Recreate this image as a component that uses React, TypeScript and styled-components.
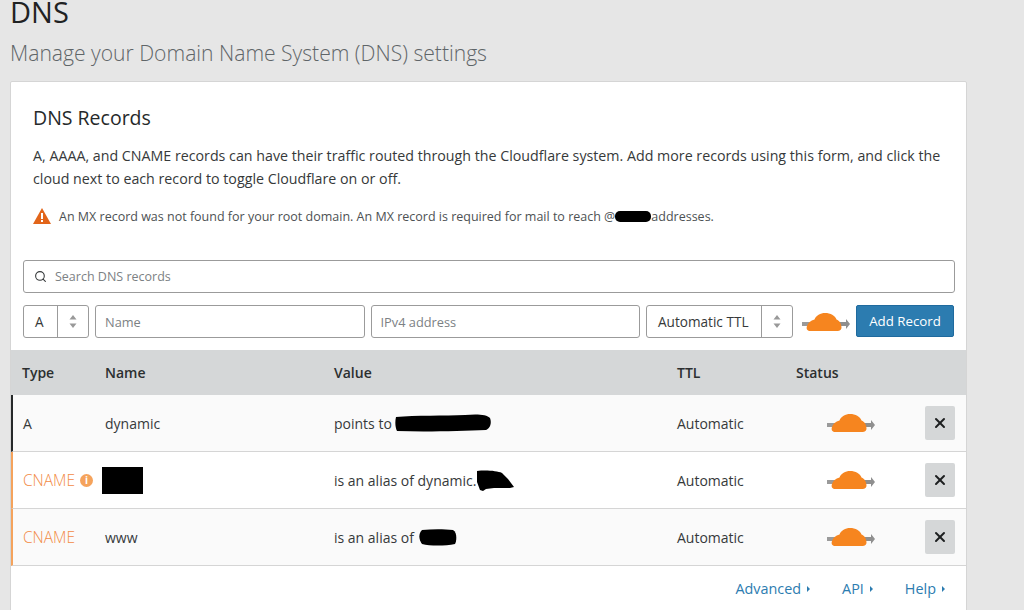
import styled, { createGlobalStyle } from "styled-components";
import { Search, X } from "lucide-react";

const GlobalStyle = createGlobalStyle`
  html, body {
    margin: 0;
    height: 100%;
    overflow: hidden;
    background: #e6e6e6;
    font-family: "Open Sans", "Liberation Sans", sans-serif;
    color: #36393a;
  }
`;

const Cloud = () => (
  <CloudSvg viewBox="0 0 48 18" width="48" height="18">
    <path d="M0 9h40v4H0z" fill="#9a9a9a" />
    <path d="M38 9h6V6l4 5-4 5v-3h-6z" fill="#8f8f8f" />
    <path
      d="M8 18C5 18 4 15.500 5 13 6 10 8.500 7.500 12.500 6.500 14 2.500 18.500 0 23 0 28.500 0 33 2.500 34.500 6.500 37.500 7.500 39.500 11 39.500 14.500 39.500 16.500 38 18 35.500 18z"
      fill="#f6851f"
    />
  </CloudSvg>
);

const Stepper = () => (
  <svg width="8" height="13" viewBox="0 0 8 13">
    <path d="M4 0l3.500 4.500h-7z M4 13L.5 8.500h7z" fill="#999" />
  </svg>
);

const Blob = ({ w, h, d }: { w: number; h: number; d: string }) => (
  <BlobSvg width={w} height={h} viewBox={`0 0 ${w} ${h}`}>
    <path d={d} fill="#000" />
  </BlobSvg>
);

const records = [
  {
    type: "A",
    proxied: false,
    name: "dynamic",
    value: "points to",
    gap: 3,
    blob: { w: 96, h: 18, d: "M1 3C20 1 50 2 70 1c10-1 22-1 25 3 2 5 0 11-4 12-25 1-60 2-89 1C0 13 0 7 1 3z" },
  },
  {
    type: "CNAME",
    proxied: true,
    info: true,
    name: "",
    value: "is an alias of dynamic.",
    gap: -2,
    blob: { w: 38, h: 21, d: "M1 1c10-1 20 0 25 2l6 6 6 8-4 1-16 0-8 1-3 2-3-1-3-8z" },
  },
  {
    type: "CNAME",
    proxied: true,
    name: "www",
    value: "is an alias of",
    gap: 5,
    blob: { w: 38, h: 17, d: "M3 1c10-1 22-1 31 0 4 2 4 10 2 14-10 2-25 2-33 0-3-4-4-10 0-14z" },
  },
];

export default function App() {
  return (
    <Page>
      <GlobalStyle />
      <PageTitle>DNS</PageTitle>
      <PageSubtitle>Manage your Domain Name System (DNS) settings</PageSubtitle>
      <Card>
        <Intro>
          <CardTitle>DNS Records</CardTitle>
          <Lead>
            A, AAAA, and CNAME records can have their traffic routed through the Cloudflare system. Add more
            records using this form, and click the cloud next to each record to toggle Cloudflare on or off.
          </Lead>
          <Warning>
            <svg width="18" height="16" viewBox="0 0 18 16">
              <path d="M9 0l9 16H0z" fill="#e2651a" />
              <path d="M8 5h2v6H8zM8 12h2v2H8z" fill="#fff" />
            </svg>
            <WarningText>
              An MX record was not found for your root domain. An MX record is required for mail to reach @
              <MailBlob />
              addresses.
            </WarningText>
          </Warning>
        </Intro>
        <Controls>
          <SearchBox>
            <Search size={13} strokeWidth={2} color="#36393a" />
            <SearchInput placeholder="Search DNS records" />
          </SearchBox>
          <AddForm>
            <SelectBox $width={66}>
              <SelectValue>A</SelectValue>
              <StepCell><Stepper /></StepCell>
            </SelectBox>
            <FieldInput placeholder="Name" />
            <FieldInput placeholder="IPv4 address" />
            <SelectBox $width={147}>
              <SelectValue>Automatic TTL</SelectValue>
              <StepCell><Stepper /></StepCell>
            </SelectBox>
            <FormCloud><Cloud /></FormCloud>
            <AddButton>Add Record</AddButton>
          </AddForm>
        </Controls>
        <HeadRow>
          <span>Type</span>
          <span>Name</span>
          <span>Value</span>
          <span>TTL</span>
          <span>Status</span>
        </HeadRow>
        {records.map((r, i) => (
          <Row key={i} $proxied={r.proxied} $odd={i % 2 === 0}>
            <TypeCell $proxied={r.proxied}>
              {r.type}
              {r.info && <InfoDot>i</InfoDot>}
            </TypeCell>
            <span>{r.name || <NameMask />}</span>
            <ValueCell $gap={r.gap}>
              {r.value}
              <Blob {...r.blob} />
            </ValueCell>
            <span>Automatic</span>
            <StatusCell>
              <Cloud />
              <RemoveButton>
                <X size={16} strokeWidth={3} color="#1d1f20" />
              </RemoveButton>
            </StatusCell>
          </Row>
        ))}
        <FooterLinks>
          <FooterLink>Advanced</FooterLink>
          <FooterLink>API</FooterLink>
          <FooterLink>Help</FooterLink>
        </FooterLinks>
      </Card>
    </Page>
  );
}

const Page = styled.div`
  width: 957px;
  padding-left: 10px;
`;

const PageTitle = styled.h1`
  margin: 0;
  font-size: 29px;
  line-height: 24px;
  font-weight: 400;
  color: #1f2223;
`;

const PageSubtitle = styled.p`
  margin: 7px 0 6px;
  font-size: 21.100px;
  line-height: 44px;
  font-weight: 300;
  color: #5f6568;
`;

const Card = styled.section`
  background: #fff;
  border: 1px solid #d5d5d5;
  border-radius: 2px 2px 0 0;
  height: 620px;
`;

const Intro = styled.div`
  padding: 22px 22px 0;
`;

const CardTitle = styled.h2`
  margin: 0 0 12px;
  font-size: 19.500px;
  line-height: 28px;
  font-weight: 400;
  color: #26292a;
`;

const Lead = styled.p`
  margin: 0;
  font-size: 14.240px;
  line-height: 23px;
  color: #36393a;
`;

const Warning = styled.div`
  display: flex;
  align-items: center;
  gap: 8px;
  margin-top: 16px;
  font-size: 12.500px;
  line-height: 20px;
  color: #4d5153;
  white-space: nowrap;
`;

const WarningText = styled.span`
  padding-top: 1px;
  margin-bottom: -1px;
`;

const MailBlob = styled.span`
  display: inline-block;
  width: 36px;
  height: 11px;
  background: #000;
  border-radius: 5px;
  vertical-align: -1px;
`;

const Controls = styled.div`
  padding: 34px 12px 12px 12px;
  display: flex;
  flex-direction: column;
  gap: 12px;
`;

const SearchBox = styled.label`
  display: flex;
  align-items: center;
  gap: 8px;
  width: 932px;
  height: 33px;
  box-sizing: border-box;
  padding-left: 10px;
  border: 1px solid #9b9b9b;
  border-radius: 3px;
`;

const SearchInput = styled.input`
  flex: 1;
  border: 0;
  outline: 0;
  padding: 0;
  font: 12.500px "Open Sans", "Liberation Sans", sans-serif;
  &::placeholder {
    color: #7c8184;
    opacity: 1;
  }
`;

const AddForm = styled.div`
  display: flex;
  align-items: flex-start;
  gap: 6px;
`;

const SelectBox = styled.div<{ $width: number }>`
  display: grid;
  grid-template-columns: 1fr 31px;
  width: ${({ $width }) => $width}px;
  height: 33px;
  box-sizing: border-box;
  border: 1px solid #9b9b9b;
  border-radius: 3px;
  font-size: 13.600px;
`;

const SelectValue = styled.span`
  display: flex;
  align-items: center;
  padding-left: 11px;
  white-space: nowrap;
  color: #36393a;
`;

const StepCell = styled.span`
  display: flex;
  align-items: center;
  justify-content: center;
  border-left: 1px solid #9b9b9b;
`;

const FieldInput = styled.input`
  width: 269.500px;
  height: 33px;
  box-sizing: border-box;
  padding: 0 9px;
  border: 1px solid #9b9b9b;
  border-radius: 3px;
  outline: 0;
  font: 12.800px "Open Sans", "Liberation Sans", sans-serif;
  &::placeholder {
    color: #7c8184;
    opacity: 1;
  }
`;

const FormCloud = styled.div`
  display: flex;
  align-items: center;
  height: 33px;
  margin-left: 3px;
`;

const CloudSvg = styled.svg`
  display: block;
  flex: none;
`;

const AddButton = styled.button`
  width: 98px;
  height: 32px;
  padding: 0;
  border: 1px solid #1f6a9e;
  border-radius: 2px;
  background: #2c7cb0;
  color: #fff;
  font: 13.300px "Open Sans", "Liberation Sans", sans-serif;
`;

const HeadRow = styled.div`
  display: grid;
  grid-template-columns: 83px 229px 343px 119px 1fr;
  align-items: center;
  height: 45px;
  padding-left: 11px;
  background: #d5d7d8;
  font-size: 14px;
  font-weight: 600;
  color: #2c2f30;
`;

const Row = styled.div<{ $proxied: boolean; $odd: boolean }>`
  display: grid;
  grid-template-columns: 83px 229px 343px 119px 1fr;
  align-items: center;
  height: 57px;
  box-sizing: border-box;
  padding-left: 9px;
  background: ${({ $odd }) => ($odd ? "#fafafa" : "#fff")};
  border-left: 2px solid ${({ $proxied }) => ($proxied ? "#f5a35c" : "#26292a")};
  border-bottom: 1px solid #d5d5d5;
  font-size: 14px;
  color: #36393a;
`;

const TypeCell = styled.span<{ $proxied: boolean }>`
  display: flex;
  align-items: center;
  gap: 5px;
  padding-left: 1px;
  font-size: ${({ $proxied }) => ($proxied ? "15.500px" : "14px")};
  font-weight: ${({ $proxied }) => ($proxied ? 300 : 400)};
  color: ${({ $proxied }) => ($proxied ? "#f28a45" : "#36393a")};
`;

const InfoDot = styled.i`
  display: inline-flex;
  align-items: center;
  justify-content: center;
  width: 13px;
  height: 13px;
  border-radius: 50%;
  background: #f5a35c;
  color: #fff;
  font: 700 10px "Open Sans", sans-serif;
`;

const NameMask = styled.span`
  display: block;
  width: 41px;
  height: 27px;
  margin-left: -3px;
  background: #000;
`;

const ValueCell = styled.span<{ $gap: number }>`
  display: flex;
  align-items: center;
  gap: ${({ $gap }) => $gap}px;
  white-space: nowrap;
`;

const BlobSvg = styled.svg`
  display: block;
  flex: none;
`;

const StatusCell = styled.span`
  display: flex;
  align-items: center;
  justify-content: space-between;
  padding: 0 11px 0 31px;
`;

const RemoveButton = styled.button`
  display: flex;
  align-items: center;
  justify-content: center;
  width: 30px;
  height: 34px;
  padding: 0;
  border: 0;
  border-radius: 2px;
  background: #d5d7d8;
`;

const FooterLinks = styled.nav`
  display: flex;
  justify-content: flex-end;
  gap: 32px;
  padding: 13px 21px 0 0;
`;

const FooterLink = styled.a`
  display: flex;
  align-items: center;
  gap: 6px;
  font-size: 14.400px;
  line-height: 20px;
  color: #2c7cb0;
  &::after {
    content: "";
    border-left: 3px solid #2c7cb0;
    border-top: 3px solid transparent;
    border-bottom: 3px solid transparent;
  }
`;
